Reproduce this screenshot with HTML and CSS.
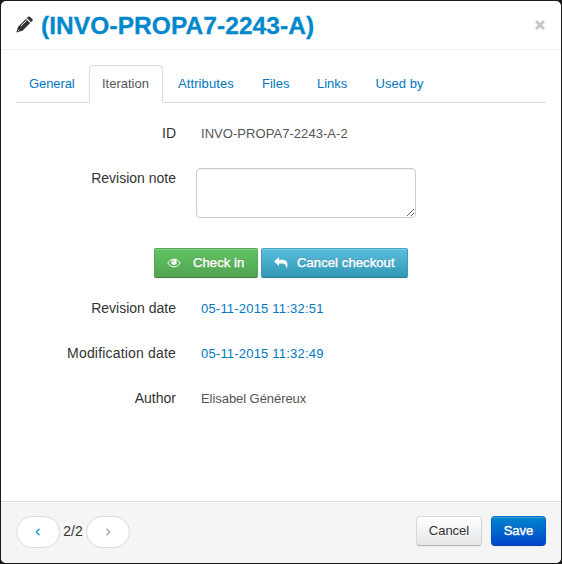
FILE: index.html
```html
<!DOCTYPE html>
<html lang="en">
<head>
<meta charset="utf-8">
<title>Document iteration</title>
<link rel="stylesheet" href="styles.css">
</head>
<body>
<div class="modal">
  <header class="modal-header">
    <h3 class="title">
      <svg class="pencil" width="18" height="18" viewBox="0 0 18 18"><path fill="#333" d="M12 .8Q13.200 0 14.200.9l2.100 2.100q1 1 0 2l-1.300 1.300-4.200-4.200zM10 2.900l4.200 4.200-7.700 7.700L.3 16.600 2.100 10.700z"/><path d="M4.800 10.100L10.600 4.500M2.100 14.200l1.200 1.200" stroke="#fff" stroke-width=".9"/></svg>
      <a>(INVO-PROPA7-2243-A)</a>
    </h3>
    <button class="close" aria-label="Close"><svg width="10" height="10" viewBox="0 0 10 10"><path d="M1.100 1.100l7.800 7.800M8.900 1.100L1.100 8.900" stroke="#c8c8c8" stroke-width="3"/></svg></button>
  </header>
  <main class="modal-body">
    <nav class="tabs">
      <a class="tab w-general">General</a>
      <a class="tab active w-iteration">Iteration</a>
      <a class="tab w-attributes">Attributes</a>
      <a class="tab w-files">Files</a>
      <a class="tab w-links">Links</a>
      <a class="tab w-used">Used by</a>
    </nav>
    <div class="row"><label>ID</label><span class="value">INVO-PROPA7-2243-A-2</span></div>
    <div class="row note"><label>Revision note</label><textarea></textarea></div>
    <div class="actions">
      <button class="btn success"><svg class="eye" width="14" height="10" viewBox="0 0 14 10" fill="none" stroke="#fff"><path d="M.7 5Q3.300 1 7 1t6.300 4Q10.700 9 7 9T.7 5z"/><circle cx="7" cy="4.300" r="2.700" fill="#fff" stroke="none"/><path d="M5.500 4.300Q5.500 2.900 7 2.800" stroke="#56aa56" stroke-width=".8"/></svg><span>Check in</span></button>
      <button class="btn info"><svg class="reply" width="14" height="12" viewBox="0 0 14 12"><path fill="#fff" d="M0 4.500L5 0v2.700h2.500C11.500 2.700 13.500 4.500 13.500 7.500c0 1.600-.6 3-1.300 4.300.2-3.700-1.200-5.300-4.700-5.300H5V9z"/></svg><span>Cancel checkout</span></button>
    </div>
    <div class="row"><label>Revision date</label><a class="value date">05-11-2015 11:32:51</a></div>
    <div class="row"><label class="wide">Modification date</label><a class="value date">05-11-2015 11:32:49</a></div>
    <div class="row"><label>Author</label><span class="value author">Elisabel Généreux</span></div>
  </main>
  <footer class="modal-footer">
    <div class="pager">
      <button class="pill" aria-label="Previous"><svg width="6" height="8" viewBox="0 0 6 8"><path d="M4.500.7L1.300 4l3.200 3.300" fill="none" stroke="#2a9fd6" stroke-width="1.500"/></svg></button>
      <span class="count">2/2</span>
      <button class="pill" aria-label="Next"><svg width="6" height="8" viewBox="0 0 6 8"><path d="M1.500.7L4.700 4 1.500 7.300" fill="none" stroke="#aaa" stroke-width="1.500"/></svg></button>
    </div>
    <div class="buttons">
      <button class="btn cancel">Cancel</button>
      <button class="btn primary">Save</button>
    </div>
  </footer>
</div>
</body>
</html>
```
FILE: styles.css
```css
* { box-sizing: border-box; }
body {
  margin: 0;
  padding: 1px;
  height: 564px;
  background: #1c1a1d;
  font: 14px/20px "Liberation Sans", Arial, sans-serif;
  color: #333;
}
button { font: inherit; margin: 0; }
svg { flex: none; }
.modal {
  display: flex;
  flex-direction: column;
  height: 562px;
  background: #fff;
  border-radius: 5px;
  overflow: hidden;
}
.modal-header {
  display: flex;
  justify-content: space-between;
  height: 49px;
  padding: 9px 15px;
  border-bottom: 1px solid #eee;
}
.title {
  display: flex;
  margin: 0;
  font-size: 24.5px;
  line-height: 32px;
  letter-spacing: .07px;
  white-space: nowrap;
}
.title a { margin-left: 7px; color: #08c; -webkit-text-stroke: .3px #08c; }
.pencil { margin-top: 6px; }
.close { display: block; height: 10px; padding: 0; margin: 10px 1px 0 0; border: 0; background: none; }
.close svg { display: block; }
.modal-body { flex: 1; padding: 15px; }
.tabs {
  display: flex;
  gap: 2px;
  height: 38px;
  margin-bottom: 20px;
  border-bottom: 1px solid #ddd;
  font-size: 13px;
}
.tab {
  height: 38px;
  padding: 8px 0 8px 12px;
  border: 1px solid transparent;
  border-radius: 4px 4px 0 0;
  color: #0077c2;
  white-space: nowrap;
}
.tab.active { background: #fff; border-color: #ddd #ddd #fff; color: #555; }
.w-general { width: 71px; letter-spacing: -.1px; }
.w-iteration { width: 74px; }
.w-attributes { width: 82px; letter-spacing: .1px; }
.w-files { width: 53px; }
.w-links { width: 56.5px; }
.w-used { width: 75px; letter-spacing: .05px; }
.row { display: flex; height: 20px; margin-bottom: 25px; }
.row label { width: 160px; margin-right: 25px; text-align: right; }
.row .wide { letter-spacing: .18px; }
.value { padding-top: 1px; font-size: 13px; color: #555; letter-spacing: .05px; }
.date { color: #0077c2; letter-spacing: .2px; }
.author { letter-spacing: -.06px; }
.note { height: 50px; margin: 0 0 30px; }
.row.note label { margin-right: 20px; }
.note textarea {
  width: 220px;
  height: 50px;
  margin: 0;
  border: 1px solid #ccc;
  border-radius: 4px;
  box-shadow: inset 0 1px 1px rgba(0, 0, 0, .075);
  resize: both;
}
.actions { display: flex; gap: 3px; height: 30px; margin: 0 0 20px 138px; }
.btn {
  display: flex;
  align-items: center;
  height: 30px;
  padding: 0 12px;
  border: 1px solid;
  border-radius: 4px;
  white-space: nowrap;
  line-height: 20px;
  box-shadow: inset 0 1px 0 rgba(255, 255, 255, .2), 0 1px 2px rgba(0, 0, 0, .05);
}
.success, .info, .primary { color: #fff; text-shadow: 0 -1px 0 rgba(0, 0, 0, .25); -webkit-text-stroke: .4px #fff; }
.success, .info { border-radius: 2px; font-size: 13px; }
.success {
  width: 104px;
  background: linear-gradient(#62c462, #51a351) border-box;
  border-color: #54a854 #54a854 #408140;
  letter-spacing: .1px;
}
.info {
  width: 147px;
  background: linear-gradient(#5bc0de, #2f96b4) border-box;
  border-color: #48a5c1 #3f9bb8 #29809a;
  letter-spacing: .1px;
}
.success, .info { justify-content: flex-start; }
.eye { margin-right: 12px; }
.reply { margin-right: 9px; }
.modal-footer {
  display: flex;
  justify-content: space-between;
  height: 62px;
  padding: 14px 15px;
  background: #f5f5f5;
  border-top: 1px solid #ddd;
  box-shadow: inset 0 1px 0 #fff;
}
.pager { display: flex; }
.pill {
  display: flex;
  align-items: center;
  justify-content: center;
  width: 44px;
  height: 32px;
  padding: 0;
  border: 1px solid #ddd;
  border-radius: 16px;
  background: #fff;
}
.count { width: 26px; text-align: center; line-height: 31px; }
.buttons { display: flex; gap: 9px; }
.buttons .btn { justify-content: center; padding: 0; font-size: 13px; }
.cancel {
  width: 66px;
  color: #333;
  background: linear-gradient(#fff, #e6e6e6);
  border-color: #d5d5d5 #d5d5d5 #b3b3b3;
  text-shadow: 0 1px 1px rgba(255, 255, 255, .75);
}
.primary {
  width: 55px;
  background: linear-gradient(#08c, #04c) border-box;
  border-color: #0074cc #0055cc #003fb3;
}
```
